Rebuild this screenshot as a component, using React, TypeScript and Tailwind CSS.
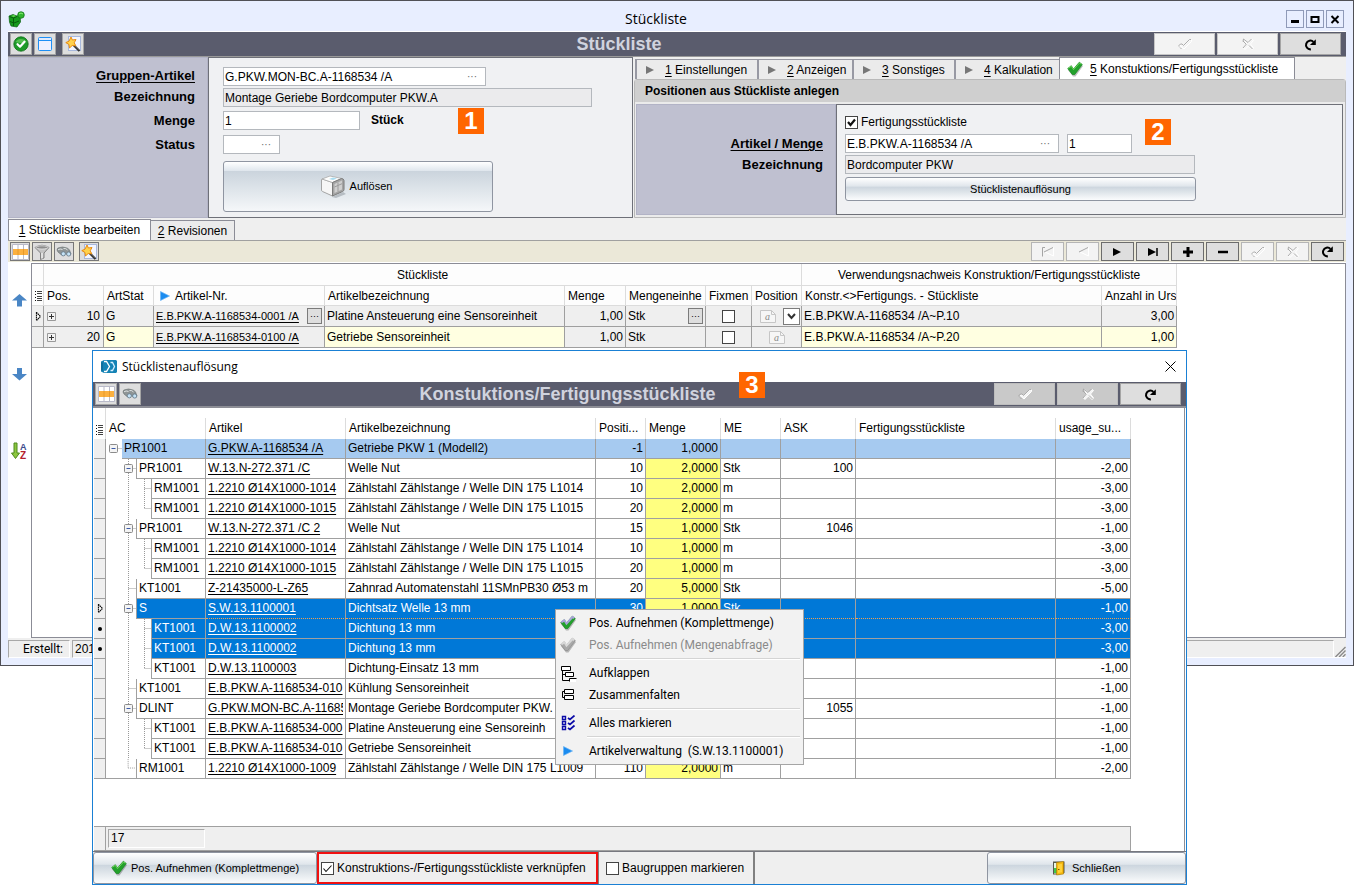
import { useState, type ReactNode } from "react";
import clsx from "clsx";

type TreeRow = {
  level: number;
  ac: string;
  artikel: string;
  text: string;
  pos?: string;
  menge?: string;
  me?: string;
  ask?: string;
  usage?: string;
  open?: boolean;
  last?: boolean;
  mark?: "cursor" | "dot";
};

const rows: TreeRow[] = [
  { level: 0, ac: "PR1001", artikel: "G.PKW.A-1168534 /A", text: "Getriebe PKW 1 (Modell2)", pos: "-1", menge: "1,0000", open: true },
  { level: 1, ac: "PR1001", artikel: "W.13.N-272.371 /C", text: "Welle Nut", pos: "10", menge: "2,0000", me: "Stk", ask: "100", usage: "-2,00", open: true },
  { level: 2, ac: "RM1001", artikel: "1.2210 Ø14X1000-1014", text: "Zählstahl Zählstange / Welle DIN 175 L1014", pos: "10", menge: "2,0000", me: "m", usage: "-3,00" },
  { level: 2, ac: "RM1001", artikel: "1.2210 Ø14X1000-1015", text: "Zählstahl Zählstange / Welle DIN 175 L1015", pos: "20", menge: "2,0000", me: "m", usage: "-3,00", last: true },
  { level: 1, ac: "PR1001", artikel: "W.13.N-272.371 /C 2", text: "Welle Nut", pos: "15", menge: "1,0000", me: "Stk", ask: "1046", usage: "-1,00", open: true },
  { level: 2, ac: "RM1001", artikel: "1.2210 Ø14X1000-1014", text: "Zählstahl Zählstange / Welle DIN 175 L1014", pos: "10", menge: "1,0000", me: "m", usage: "-3,00" },
  { level: 2, ac: "RM1001", artikel: "1.2210 Ø14X1000-1015", text: "Zählstahl Zählstange / Welle DIN 175 L1015", pos: "20", menge: "1,0000", me: "m", usage: "-3,00", last: true },
  { level: 1, ac: "KT1001", artikel: "Z-21435000-L-Z65", text: "Zahnrad Automatenstahl 11SMnPB30 Ø53 m", pos: "20", menge: "5,0000", me: "Stk", usage: "-5,00" },
  { level: 1, ac: "S", artikel: "S.W.13.1100001", text: "Dichtsatz Welle 13 mm", pos: "30", menge: "1,0000", me: "Stk", usage: "-1,00", open: true, mark: "cursor" },
  { level: 2, ac: "KT1001", artikel: "D.W.13.1100002", text: "Dichtung 13 mm", usage: "-3,00", mark: "dot" },
  { level: 2, ac: "KT1001", artikel: "D.W.13.1100002", text: "Dichtung 13 mm", usage: "-3,00", mark: "dot" },
  { level: 2, ac: "KT1001", artikel: "D.W.13.1100003", text: "Dichtung-Einsatz 13 mm", usage: "-1,00", last: true },
  { level: 1, ac: "KT1001", artikel: "E.B.PKW.A-1168534-010", text: "Kühlung Sensoreinheit", usage: "-1,00" },
  { level: 1, ac: "DLINT", artikel: "G.PKW.MON-BC.A-11685", text: "Montage Geriebe Bordcomputer PKW.", ask: "1055", usage: "-1,00", open: true },
  { level: 2, ac: "KT1001", artikel: "E.B.PKW.A-1168534-000", text: "Platine Ansteuerung eine Sensoreinh", usage: "-1,00" },
  { level: 2, ac: "KT1001", artikel: "E.B.PKW.A-1168534-010", text: "Getriebe Sensoreinheit", usage: "-1,00", last: true },
  { level: 1, ac: "RM1001", artikel: "1.2210 Ø14X1000-1009", text: "Zählstahl Zählstange / Welle DIN 175 L1009", pos: "110", menge: "2,0000", me: "m", usage: "-2,00", last: true },
];

/* ---------- icons ---------- */

const GreenCheck = ({ gray, lilac }: { gray?: boolean; lilac?: boolean }) => (
  <svg width="16" height="16" viewBox="0 0 16 16">
    <path d="M1 8.500 4.500 6 7 9 13 2l3 2.500L8.500 15H6z" fill="#000" opacity=".25" transform="translate(0 .5)" />
    <path d="M.7 7.500 4.300 4.700 6.500 8 12.300 1.200 15.300 3.500 7.800 13.500H5.300z" fill={gray ? "#a9a9a9" : "#23a12c"} stroke={gray ? "#8d8d8d" : "#158a20"} strokeWidth=".7" />
    <path d="M1.300 7.300 4.300 5.300 6.500 8.700 12.500 2 14.300 3.200" fill="none" stroke={gray ? "#d8d8d8" : lilac ? "#a9a3d8" : "#6fd45c"} strokeWidth={lilac || gray ? 2 : 1} />
  </svg>
);

const RoundCheckIcon = () => (
  <svg width="16" height="16" viewBox="0 0 16 16">
    <circle cx="8" cy="8" r="7.2" fill="#1d9a28" stroke="#0c6d15" strokeWidth=".8" />
    <path d="M2.500 6a6 5 0 0 1 11 0q-5.500 2-11 0z" fill="#6cd061" opacity=".7" />
    <path d="m4.500 8.200 2.500 2.500 4.500-5" fill="none" stroke="#fff" strokeWidth="2.200" strokeLinecap="round" strokeLinejoin="round" />
  </svg>
);

const WindowIcon = () => (
  <svg width="16" height="16" viewBox="0 0 16 16">
    <rect x="1.500" y="1.500" width="13" height="13" rx="1" fill="#eef0ff" stroke="#1e8ff5" />
    <path d="M2 4.500h12" stroke="#1e8ff5" />
    <path d="M2 3h12" stroke="#cfe6ff" />
  </svg>
);

const WandIcon = () => (
  <svg width="16" height="16" viewBox="0 0 16 16">
    <rect x="3.500" y=".5" width="12" height="14" fill="#f2f5ff" stroke="#a8b8dc" />
    <path d="m8.500 9 6 6" stroke="#333" strokeWidth="2.200" />
    <path d="m9.500 9 5 5" stroke="#999" strokeWidth=".7" />
    <path d="m6 1 1.400 3 3.600-.5L9.200 6.800l1.600 3-3.600-.3L4.500 12l-.6-3.600L.8 6.600 4 5.200z" fill="#ffd24d" stroke="#e88a10" strokeWidth="1" />
  </svg>
);

const GridIcon = () => (
  <svg width="17" height="16" viewBox="0 0 17 16">
    <path fill="#fff" stroke="#b9bac9" d="M.5.5h16v15H.5z" />
    <path stroke="#b9bac9" d="M6 1v14M11.500 1v14" />
    <path fill="#fbb040" d="M1 5h15v6H1z" />
    <path stroke="#e89a28" d="M6 5v6M11.500 5v6" />
  </svg>
);

const FilterIcon = () => (
  <svg width="16" height="16" viewBox="0 0 16 16">
    <path d="M1 3.500Q8-1 15 3.500L10 9v5l-3.500 1.500V9z" fill="#c4c4c4" stroke="#6d6d6d" strokeWidth=".8" />
    <ellipse cx="8" cy="3.400" rx="6" ry="1.600" fill="#8d8d8d" stroke="#eee" strokeWidth=".7" />
    <path d="M8 9v5.500" stroke="#fff" />
  </svg>
);

const BinocularsIcon = () => (
  <svg width="16" height="14" viewBox="0 0 16 14">
    <path d="M1 5q0-2.500 3-2.500L6.500 2l2.500.5q3 0 4.500 2.500l1.500 4-3 1-4-2-3 1.500L2 7z" fill="#8f9596" stroke="#62696a" strokeWidth=".6" />
    <path d="M2 4.800q2-1.500 4.500-.3M7.500 3.500q2.500-.5 4 1.500" stroke="#dfe3e3" fill="none" />
    <circle cx="7.300" cy="8.800" r="2.100" fill="#c4e3f7" stroke="#6b7f8d" strokeWidth=".9" />
    <circle cx="12.700" cy="9" r="2.100" fill="#c4e3f7" stroke="#6b7f8d" strokeWidth=".9" />
  </svg>
);

const AppLogo = () => (
  <svg width="17" height="17" viewBox="0 0 17 17">
    <path d="M1 5 5 3.500 9 5l3-1 .5 7L9 16l-6-1-1.500-4z" fill="#169a1c" stroke="#0a5f10" strokeWidth=".7" />
    <path d="m1.500 5.500 4 1.500L9 5.500M2 10.500l4 1.500 5-2M5.500 7v8" stroke="#075c0c" fill="none" />
    <path d="m3 5 3-1 2 1-2.500 1z" fill="#62d84f" />
    <circle cx="13" cy="4" r="3.300" fill="#2fb52c" stroke="#0b6d12" strokeWidth=".7" />
    <path d="M11 3q2-2 4 0" stroke="#8bec77" fill="none" />
  </svg>
);

const DialogLogo = () => (
  <svg width="16" height="13" viewBox="0 0 16 13">
    <path d="M0 1.500 3 0v13l-3-1.500zM3 0h12l1 1v11l-1 1H3z" fill="#1583b5" />
    <path d="M3 1.500h2.500L8.500 6.500l-3 5H3" fill="none" stroke="#fff" strokeWidth="1.300" />
    <path d="M9.500 2.500h2l2 4-2 4h-2" fill="none" stroke="#d5efff" strokeWidth="1.300" />
    <path d="M1 2.500v8" stroke="#0a5a86" />
  </svg>
);

const BoxIcon = () => (
  <svg width="27" height="24" viewBox="0 0 27 24">
    <path d="m12 22 11-5 3 2-10 4z" fill="#8a929a" opacity=".5" />
    <path d="M1.500 5q0-1 1-1l10 3.500V21l-10-4.500q-1-.5-1-1.500z" fill="#f6f6f6" stroke="#a4a4a4" />
    <path d="m2 4 8-3 12 2.500-9.500 4z" fill="#fdfdfd" stroke="#aaa" strokeWidth=".8" />
    <path d="m9 4 4-1.500 4 1-4 1.500z" fill="#a9dcf0" />
    <path d="m12.500 7.500 9-4q2 0 2.500 2v9q0 1.500-1.500 2L12.500 21z" fill="#a5a5a5" stroke="#7b7b7b" />
    <path d="m14.500 9 7.500-3.500v9L14.500 18z" fill="#cfcfcf" />
    <path d="m14.500 12 7.500-3.300M18 7.500v9" stroke="#9b9b9b" />
  </svg>
);

const DoorIcon = () => (
  <svg width="14" height="16" viewBox="0 0 14 16">
    <path d="M1 1.500h11.500V13L7 14.500H1z" fill="#56594f" />
    <path d="M2 3h3v10.500H2z" fill="#e9f5e4" />
    <path d="M2 8h3v5H2z" fill="#3fc64b" />
    <path d="m4.500 2.500 7-1v12.500l-7 1z" fill="#f6b90f" stroke="#a67700" strokeWidth=".6" />
    <path d="m6 4.500 4-.7v8.500l-4 .7z" fill="#ffd23c" />
    <path d="M6 9.500h1.500" stroke="#7a5600" />
  </svg>
);

const ReloadIcon = () => (
  <svg width="13" height="13" viewBox="1 1 11 11">
    <path d="M6.800 10.600A3.700 3.700 0 1 1 9 4.300" fill="none" stroke="#000" strokeWidth="1.700" />
    <path d="M11 2v5H6z" fill="#000" />
  </svg>
);

const OutlineCheck = () => (
  <svg width="14" height="12" viewBox="0 0 14 12">
    <path d="m2 7.500 2-1 1.500 1.500L12 1.500l1.500.5v1.500L6 11z" fill="#f3f3f3" stroke="#fff" />
    <path d="M1 8.500v-1L2.500 6H4l1.500 1.500 6-6H13M2 9.500l1.500 1.500" fill="none" stroke="#a3a3a3" strokeWidth=".9" />
  </svg>
);

const OutlineCross = () => (
  <svg width="12" height="12" viewBox="0 0 12 12">
    <path d="m2.500 1.500 4 3.500L10 1.500l1.500 1L8.500 6l3 4-1.500 1.500L6.500 8 3 11.500 1.500 10 4.500 6z" fill="#f3f3f3" stroke="#fff" />
    <path d="m1 3.500.5-2.500L6 4.500 9.500 1M4.500 6 1 10M1 3l3 3M7 7.500l3.500 3.500" fill="none" stroke="#a3a3a3" strokeWidth=".9" />
  </svg>
);

const PrevIcon = ({ first }: { first?: boolean }) => (
  <svg width="14" height="10" viewBox="0 0 14 10">
    <path d="M12.500.5v8.500L4 5" fill="none" stroke="#fff" />
    <path d="M12 .5 3 5" fill="none" stroke="#a5a5a5" />
    {first && <path d="M4 .5H1.500v9" fill="none" stroke="#a5a5a5" />}
  </svg>
);

const NextIcon = ({ last }: { last?: boolean }) => (
  <svg width="12" height="8" viewBox="0 0 12 8">
    <path d="M1 0v8l8-4z" fill="#000" />
    {last && <path d="M10 0v8" stroke="#000" strokeWidth="1.500" />}
  </svg>
);

const SignIcon = ({ plus }: { plus?: boolean }) => (
  <svg width="10" height="10" viewBox="0 0 10 10">
    <path d={plus ? "M0 5h10M5 0v10" : "M0 5h10"} stroke="#000" strokeWidth={plus ? 3 : 2.500} />
  </svg>
);

const BlueTriangle = () => (
  <svg width="10" height="10" viewBox="0 0 10 10">
    <path d="M.5.5v9L9.500 5z" fill="#1b8cf0" stroke="#6bb5f5" strokeWidth=".7" />
  </svg>
);

const ListIcon = () => (
  <svg width="7" height="10" viewBox="0 0 7 10" className="inline-block align-middle">
    <path d="M2 .5h5M2 2.500h5M2 5.500h5M2 7.500h5M2 9.500h5" stroke="#111" strokeWidth=".8" />
    <path d="M0 .5h1M0 3.500h1M0 6.500h1M0 9.500h1" stroke="#111" />
  </svg>
);

const CursorIcon = () => (
  <svg width="6" height="9" viewBox="0 0 6 9" className="mx-auto">
    <path d="M1.500 .5v8l4-4z" fill="#fff" stroke="#111" strokeWidth="1.200" strokeDasharray="1.500 .5" />
  </svg>
);

const ArrowIcon = ({ down }: { down?: boolean }) => (
  <svg width="15" height="13" viewBox="0 0 15 13">
    <path d={down ? "M5 0h5v6h5l-7.500 6.500L0 6h5z" : "M5 12.500h5v-6h5L7.500 0 0 6.500h5z"} fill="#4a86c5" />
  </svg>
);

const NoteIcon = () => (
  <svg width="16" height="13" viewBox="0 0 16 13">
    <path d="M.5.5h11l4 4v8H.5z" fill="#f6f6f6" stroke="#c6c6c6" />
    <path d="M11.500.5v4h4" fill="none" stroke="#c6c6c6" />
    <text x="5" y="10" fontSize="10" fontStyle="italic" fill="#8a8a8a" className="font-['Liberation_Serif',serif]">a</text>
  </svg>
);

const ExpandIcon = () => (
  <svg width="17" height="17" viewBox="0 0 17 17">
    <path d="M2 2h8v3H2zM6 8h7v3H6zM10 14h6v3h-6z" fill="#fff" />
    <path d="M1.500 1.500h9v4h-9zM5.500 7.500h8v4h-8zM9.500 16.500v-3h7M2.500 5.500v10h7M2.500 9.500h3" fill="none" stroke="#000" />
  </svg>
);

const CollapseIcon = () => (
  <svg width="14" height="14" viewBox="0 0 14 14">
    <path d="M3.500 1.500h9v4h-9zM3.500 7.500h9v4h-9z" fill="#fff" stroke="#000" />
    <path d="M3 3.500H1.500v6H3" fill="none" stroke="#000" />
  </svg>
);

const MarkAllIcon = () => (
  <svg width="15" height="16" viewBox="0 0 15 16">
    <path d="M1.500 1.500h3v3h-3zM1.500 6.500h3v3h-3zM1.500 11.500h3v3h-3z" fill="none" stroke="#0c0ca8" strokeWidth="1.400" />
    <path d="m7 3 2 1.500L13.500.5M7 8l2 1.500 4.500-4M7 13l2 1.500 4.500-4" fill="none" stroke="#0c0ca8" strokeWidth="1.700" />
  </svg>
);

const ExpandBox = () => (
  <svg width="9" height="9" viewBox="0 0 9 9">
    <path d="M.5.5h8v8h-8z" fill="#f3f3f3" stroke="#999" />
    <path d="M2 4.500h5M4.500 2v5" stroke="#333" />
  </svg>
);

/* ---------- small building blocks ---------- */

const field = "h-[19px] border border-[#b4b8bd] bg-white px-px text-[12px] outline-none";
const fieldReadonly = "h-[19px] border border-[#b4b8bd] bg-[#ebebed] px-px text-[12px] outline-none";
const glossy = "rounded-[3px] border border-[#8f95a1] text-[11px] flex items-center justify-center";
const glossyBg = "bg-[linear-gradient(#ffffff_0%,#dfe5eb_38%,#ccd5de_40%,#dfe5ea_65%,#fbfcfd_100%)]";
const dots = "h-4 w-[15px] border border-[#7b7b7b] bg-[#dedede] text-[9px] leading-none";

function IconButton({ label, children, className }: { label: string; children: ReactNode; className?: string }) {
  return (
    <button aria-label={label} className={clsx("flex items-center justify-center border bg-[#dedede]", className)}>
      {children}
    </button>
  );
}

function NavButton({ label, disabled, children }: { label: string; disabled?: boolean; children: ReactNode }) {
  return (
    <button
      aria-label={label}
      disabled={disabled}
      className={clsx("flex h-[19px] w-[33px] items-center justify-center border", disabled ? "border-[#b5b5b5] bg-[#f3f3f3]" : "border-[#6c6c6c] bg-[#dedede]")}
    >
      {children}
    </button>
  );
}

function Lookup({ id, value, className }: { id: string; value: string; className: string }) {
  return (
    <div className={clsx("flex h-[19px] items-center border border-[#b4b8bd] bg-white", className)}>
      <input id={id} defaultValue={value} className="min-w-0 flex-1 bg-transparent px-px text-[12px] outline-none" />
      <button aria-label="Auswahl" className="w-[18px] text-left text-[10px] leading-none text-[#666]">···</button>
    </div>
  );
}

function Checkbox({ label, checked, bold }: { label?: string; checked?: boolean; bold?: boolean }) {
  return (
    <label className="relative flex items-center gap-[3px] text-[12px] whitespace-nowrap">
      <input type="checkbox" defaultChecked={checked} aria-label={label ?? "Fixmenge"} className="peer size-[13px] appearance-none border border-[#444] bg-white" />
      <svg width="13" height="13" viewBox="0 0 13 13" className="pointer-events-none absolute left-0 hidden peer-checked:block">
        <path d={bold ? "m3 6 2.500 3L10 3.500" : "m2.500 6.500 2.500 3 5.500-6"} fill="none" stroke="#111" strokeWidth={bold ? 2.200 : 1.100} />
      </svg>
      {label}
    </label>
  );
}

function Badge({ n, className }: { n: number; className: string }) {
  return <div className={clsx("absolute flex size-[26px] items-center justify-center bg-[#ff6600] text-[24px] leading-none font-bold text-white", className)}>{n}</div>;
}

// Tab caption with its underlined accelerator digit
const TabText = ({ n, children }: { n: number; children: ReactNode }) => (
  <span className="whitespace-nowrap">
    <span className="underline underline-offset-2">{n}</span> {children}
  </span>
);

function TreeGutter({ row, isLastRow }: { row: TreeRow; isLastRow: boolean }) {
  const width = [16, 30, 45][row.level];
  const x = [7.5, 22.5, 38.5][row.level];
  return (
    <svg width={width} height="20" viewBox={`0 0 ${width} 20`} className={clsx("shrink-0", isLastRow && "border-b border-[#a0a0a0]")}>
      <g stroke="#999" strokeDasharray="1 1" fill="none">
        {row.level > 0 && <path d={isLastRow ? "M22.500 0V10" : "M22.500 0V20"} />}
        {row.level === 2 && <path d={row.last ? "M38.500 0V10" : "M38.500 0V20"} />}
        <path d={`M${x} 9.500H${width}`} />
      </g>
      {row.open && (
        <g>
          <rect x={x - 4} y="5.500" width="8" height="8" rx="1" fill="#f4f4f4" stroke="#8b8b8b" />
          <path d={`M${x - 2} 9.500h4`} stroke="#3b5ba8" />
        </g>
      )}
    </svg>
  );
}

/* ---------- upper form ---------- */

const tabs = ["Einstellungen", "Anzeigen", "Sonstiges", "Kalkulation"];
const tabWidths = ["w-[122px]", "w-[95px]", "w-[102px]", "w-[105px]"];

function HeadForm() {
  return (
    <div className="flex h-[161px] flex-1 shrink-0 basis-[625px]">
      <div className="flex w-[200px] shrink-0 flex-col items-end border border-[#b2b3c6] bg-[#bfc0d0] pt-[8px] pr-3 text-[13px] leading-[19px] font-bold">
        <label htmlFor="gruppe" className="underline underline-offset-2">Gruppen-Artikel</label>
        <label htmlFor="bez" className="mt-[2px]">Bezeichnung</label>
        <label htmlFor="menge" className="mt-[5px]">Menge</label>
        <label htmlFor="status" className="mt-[5px]">Status</label>
      </div>
      <div className="relative flex flex-1 flex-col items-start border border-[#6e7078] bg-[#f0f1f3] pt-[9px] pl-[14px]">
        <Lookup id="gruppe" value="G.PKW.MON-BC.A-1168534 /A" className="w-[263px]" />
        <input id="bez" readOnly value="Montage Geriebe Bordcomputer PKW.A" className={clsx(fieldReadonly, "mt-[2px] w-[369px]")} />
        <div className="mt-[4px] flex items-center gap-[11px]">
          <input id="menge" defaultValue="1" className={clsx(field, "w-[137px]")} />
          <span className="text-[12px] leading-[19px] font-bold">Stück</span>
        </div>
        <Lookup id="status" value="" className="mt-[5px] w-[57px]" />
        <button className={clsx(glossy, "mt-[7px] h-[51px] w-[270px] gap-[3px] bg-[linear-gradient(#ffffff_0%,#dfe6ed_18%,#cbd4dd_19%,#dbe2e8_50%,#f5f7f9_100%)] pr-1")}>
          <BoxIcon />
          Auflösen
        </button>
        <Badge n={1} className="top-[50px] left-[249px]" />
      </div>
    </div>
  );
}

function CreatePanel() {
  return (
    <div className="flex h-[161px] shrink-0 grow-0 basis-[713px] flex-col pl-px">
      <div className="flex h-[22px] items-end pl-px text-[12px]">
        {tabs.map((t, i) => (
          <button key={t} className={clsx("flex h-[20px] items-center gap-[11px] border-t border-l-2 border-[#9899a3] bg-[#ebebeb] pl-[9px]", tabWidths[i])}>
            <svg width="8" height="8" viewBox="0 0 8 8"><path d="M0 0v8l8-4z" fill="#777" /></svg>
            <TabText n={i + 1}>{t}</TabText>
          </button>
        ))}
        <button className="flex h-[22px] w-[236px] items-center gap-[7px] border border-b-0 border-[#8b8c96] bg-white pl-[7px]">
          <GreenCheck />
          <TabText n={5}>Konstuktions/Fertigungsstückliste</TabText>
        </button>
      </div>
      <div className="flex flex-1 flex-col rounded-t-[3px] border border-[#b9b9b9] bg-[#ebebeb]">
        <h2 className="h-[22px] bg-[#cfcfcf] pl-[10px] text-[12px] leading-[22px] font-bold">Positionen aus Stückliste anlegen</h2>
        <div className="flex flex-1 px-[2px] py-[2px] pl-px">
          <div className="flex w-[200px] shrink-0 flex-col items-end border border-[#b2b3c6] bg-[#bfc0d0] pt-[29px] pr-3 text-[13px] leading-[19px] font-bold">
            <label htmlFor="artikel" className="underline underline-offset-2">Artikel / Menge</label>
            <label htmlFor="bez2" className="mt-[2px]">Bezeichnung</label>
          </div>
          <div className="relative flex flex-1 flex-col items-start border border-[#6e7078] bg-[#f0f1f3] pt-2 pl-[8px]">
            <Checkbox label="Fertigungsstückliste" checked bold />
            <div className="mt-[3px] flex gap-2">
              <Lookup id="artikel" value="E.B.PKW.A-1168534 /A" className="w-[214px]" />
              <input aria-label="Menge" defaultValue="1" className={clsx(field, "w-[65px]")} />
            </div>
            <input id="bez2" readOnly value="Bordcomputer PKW" className={clsx(fieldReadonly, "mt-[2px] w-[350px]")} />
            <button className={clsx(glossy, glossyBg, "mt-[3px] h-[24px] w-[351px]")}>Stücklistenauflösung</button>
            <Badge n={2} className="top-[14px] left-[308px]" />
          </div>
        </div>
      </div>
    </div>
  );
}

/* ---------- grid of the main window ---------- */

function MainGrid() {
  const head = "overflow-hidden border-r border-b border-[#dcdcdc] bg-[#fdfdfd] px-[3px] font-normal whitespace-nowrap";
  const cell = "overflow-hidden border-r border-b border-[#9f9f9f] px-[2px] whitespace-nowrap";
  const data = [
    { pos: "10", nr: "E.B.PKW.A-1168534-0001 /A", text: "Platine Ansteuerung eine Sensoreinheit", use: "E.B.PKW.A-1168534 /A~P.10", count: "3,00" },
    { pos: "20", nr: "E.B.PKW.A-1168534-0100 /A", text: "Getriebe Sensoreinheit", use: "E.B.PKW.A-1168534 /A~P.20", count: "1,00" },
  ];
  return (
    <table className="w-[1145px] table-fixed border-separate border-spacing-0 text-[12px] leading-[18px]">
      <colgroup>
        <col className="w-[12px]" />
        <col className="w-[60px]" />
        <col className="w-[50px]" />
        <col className="w-[171px]" />
        <col className="w-[240px]" />
        <col className="w-[61px]" />
        <col className="w-[80px]" />
        <col className="w-[46px]" />
        <col className="w-[50px]" />
        <col className="w-[300px]" />
        <col className="w-[75px]" />
      </colgroup>
      <thead>
        <tr className="h-[22px] text-center">
          <th className={head} />
          <th colSpan={8} className={head}>Stückliste</th>
          <th colSpan={2} className={head}>Verwendungsnachweis Konstruktion/Fertigungsstückliste</th>
        </tr>
        <tr className="h-[20px] text-left">
          <th className={clsx(head, "px-[2px]")}><ListIcon /></th>
          <th className={head}>Pos.</th>
          <th className={head}>ArtStat</th>
          <th className={head}>
            <span className="flex items-center gap-[5px] pl-[3px]"><BlueTriangle /> Artikel-Nr.</span>
          </th>
          <th className={head}>Artikelbezeichnung</th>
          <th className={head}>Menge</th>
          <th className={head}>Mengeneinhe</th>
          <th className={head}>Fixmen</th>
          <th className={head}>Position</th>
          <th className={head}>Konstr.&lt;&gt;Fertigungs. - Stückliste</th>
          <th className={head}>Anzahl in Urs</th>
        </tr>
      </thead>
      <tbody>
        {data.map((d, i) => {
          const first = i === 0;
          const edit = first ? "bg-[#efefef]" : "bg-[#ffffe1]";
          return (
            <tr key={d.pos} className="h-[21px] bg-[#efefef]">
              <td className={cell}>{first && <CursorIcon />}</td>
              <td className={cell}>
                <span className="flex items-center justify-between px-px"><ExpandBox />{d.pos}</span>
              </td>
              <td className={clsx(cell, edit)}>G</td>
              <td className={cell}>
                <span className="flex items-center justify-between">
                  <a href="#artikel" className="text-[11px] underline underline-offset-2">{d.nr}</a>
                  {first && <button aria-label="Artikel wählen" className={dots}>···</button>}
                </span>
              </td>
              <td className={clsx(cell, edit)}>{d.text}</td>
              <td className={clsx(cell, "text-right")}>1,00</td>
              <td className={cell}>
                <span className="flex items-center justify-between">
                  Stk
                  {first && <button aria-label="Einheit wählen" className={dots}>···</button>}
                </span>
              </td>
              <td className={cell}><span className="flex justify-center"><Checkbox /></span></td>
              <td className={clsx(cell, "pr-px")}>
                <span className={clsx("flex items-center", first ? "justify-end gap-[7px]" : "justify-center")}>
                  <NoteIcon />
                  {first && (
                    <button aria-label="Öffnen" className="flex h-[17px] w-[17px] items-center justify-center border border-[#7b7b7b] bg-white">
                      <svg width="9" height="7" viewBox="0 0 9 7"><path d="m1 1 3.500 4L8 1" fill="none" stroke="#333" strokeWidth="2" /></svg>
                    </button>
                  )}
                </span>
              </td>
              <td className={clsx(cell, edit)}>{d.use}</td>
              <td className={clsx(cell, edit, "text-right")}>{d.count}</td>
            </tr>
          );
        })}
      </tbody>
    </table>
  );
}

/* ---------- dialog ---------- */

function TreeTable() {
  return (
    <table className="w-[1037px] table-fixed border-separate border-spacing-0 text-[12px] leading-[19px]">
      <colgroup>
        <col className="w-[12px]" />
        <col className="w-[100px]" />
        <col className="w-[140px]" />
        <col className="w-[250px]" />
        <col className="w-[50px]" />
        <col className="w-[75px]" />
        <col className="w-[60px]" />
        <col className="w-[75px]" />
        <col className="w-[200px]" />
        <col className="w-[75px]" />
      </colgroup>
      <thead>
        <tr className="h-[31px] text-left align-bottom">
          <th className="border-r border-[#dcdcdc] px-[2px] font-normal"><ListIcon /></th>
          {["AC", "Artikel", "Artikelbezeichnung", "Positi...", "Menge", "ME", "ASK", "Fertigungsstückliste", "usage_su..."].map((h) => (
            <th key={h} className="p-0 font-normal">
              <div className="h-[21px] overflow-hidden border-r border-[#dcdcdc] px-[3px] leading-[21px] whitespace-nowrap">{h}</div>
            </th>
          ))}
        </tr>
      </thead>
      <tbody>
        {rows.map((r, i) => {
          const cell = clsx(
            "overflow-hidden border-r border-b px-[2px] py-0 whitespace-nowrap",
            r.mark === "cursor" ? "border-[#a0a0a0] border-b-[#f0a050] [border-bottom-style:dotted]" : "border-[#a0a0a0]",
            r.level === 0 && "bg-[#a6caf0]",
            r.mark && "bg-[#0078d7] text-white"
          );
          return (
            <tr key={i} className="h-[20px]">
              <td className="border-r border-b border-[#a0a0a0] bg-[#efefef] p-0 text-center">
                {r.mark === "cursor" && <CursorIcon />}
                {r.mark === "dot" && <span className="mx-auto block size-1 rounded-full bg-black" />}
              </td>
              <td className="border-r border-[#a0a0a0] p-0">
                <div className="flex h-[20px]">
                  <TreeGutter row={r} isLastRow={i === rows.length - 1} />
                  <span
                    className={clsx(
                      "flex-1 border-b border-[#a0a0a0] pl-[2px]",
                      r.level > 0 && "border-l",
                      r.level === 0 && "bg-[#a6caf0]",
                      r.mark && "bg-[#0078d7] text-white"
                    )}
                  >
                    {r.ac}
                  </span>
                </div>
              </td>
              <td className={cell}>
                <a href="#artikel" className="block overflow-hidden underline underline-offset-2">{r.artikel}</a>
              </td>
              <td className={cell}>{r.text}</td>
              <td className={clsx(cell, "text-right")}>{r.pos}</td>
              <td className={clsx("border-r border-b border-[#a0a0a0] px-[2px] py-0 text-right", r.level === 0 ? "bg-[#a6caf0]" : "bg-[#ffff80]")}>{r.menge}</td>
              <td className={cell}>{r.me}</td>
              <td className={clsx(cell, "text-right")}>{r.ask}</td>
              <td className={cell} />
              <td className={clsx(cell, "text-right")}>{r.usage}</td>
            </tr>
          );
        })}
      </tbody>
    </table>
  );
}

function MenuItem({ icon, children, disabled }: { icon: ReactNode; children: ReactNode; disabled?: boolean }) {
  return (
    <button role="menuitem" disabled={disabled} className={clsx("flex h-[22px] w-full items-center whitespace-pre", disabled ? "text-[#8a8a8a]" : "text-black")}>
      <span className="flex w-[31px] shrink-0 justify-center pr-[11px]">{icon}</span>
      {children}
    </button>
  );
}

const MenuLine = () => <div className="my-[2px] mr-px ml-[29px] h-[2px] border-t border-[#d4d4d4] bg-white" />;

function ContextMenu() {
  return (
    <div role="menu" className="absolute top-[258px] left-[462px] w-[249px] border border-[#a5a5a5] bg-[#f2f2f2] p-[2px] font-['Roboto',sans-serif] text-[12px]">
      <MenuItem icon={<GreenCheck lilac />}>Pos. Aufnehmen (Komplettmenge)</MenuItem>
      <MenuItem icon={<GreenCheck gray />} disabled>Pos. Aufnehmen (Mengenabfrage)</MenuItem>
      <MenuLine />
      <MenuItem icon={<ExpandIcon />}>Aufklappen</MenuItem>
      <MenuItem icon={<CollapseIcon />}>Zusammenfalten</MenuItem>
      <MenuLine />
      <MenuItem icon={<MarkAllIcon />}>Alles markieren</MenuItem>
      <MenuLine />
      <MenuItem icon={<BlueTriangle />}>{"Artikelverwaltung  (S.W.13.1100001)"}</MenuItem>
    </div>
  );
}

function Dialog({ onClose }: { onClose: () => void }) {
  return (
    <div role="dialog" aria-label="Stücklistenauflösung" className="absolute top-[350px] left-[92px] w-[1095px] border border-[#1a80d4] bg-white">
      <div className="flex h-[31px] items-center justify-between pr-[10px] pl-2">
        <div className="flex items-center gap-[5px] font-['Open_Sans','Noto_Sans',sans-serif] text-[12px]">
          <DialogLogo />
          Stücklistenauflösung
        </div>
        <button aria-label="Fenster schließen" onClick={onClose}>
          <svg width="11" height="11" viewBox="0 0 11 11"><path d="m.5.5 10 10m0-10-10 10" stroke="#000" /></svg>
        </button>
      </div>
      <div className="flex h-[26px] items-center gap-[2px] border-b-2 border-[#8d8e96] bg-[#5a5c6d] pr-[5px] pl-[2px]">
        <IconButton label="Tabelle" className="size-[22px] border-[#a5a5a5]"><GridIcon /></IconButton>
        <IconButton label="Suchen" className="size-[22px] border-[#a5a5a5]"><BinocularsIcon /></IconButton>
        <h2 className="flex-1 text-center text-[18px] leading-none font-bold text-[#d0d3de]">Konstuktions/Fertigungsstückliste</h2>
        <button aria-label="Speichern" disabled className="flex h-[22px] w-[61px] items-center justify-center border border-[#bdbdbd] bg-[#c9c9c9]"><OutlineCheck /></button>
        <button aria-label="Abbrechen" disabled className="flex h-[22px] w-[61px] items-center justify-center border border-[#bdbdbd] bg-[#c9c9c9]"><OutlineCross /></button>
        <IconButton label="Aktualisieren" className="h-[22px] w-[61px] border-[#a5a5a5]"><ReloadIcon /></IconButton>
      </div>
      <div className="mr-px border-r border-[#8d8e96] pl-px">
        <TreeTable />
        <div className="mt-[47px] flex h-[25px] w-[1037px] border-y border-r border-[#a0a0a0] bg-[#efefef]">
          <div className="w-[12px] border-r border-[#a0a0a0]" />
          <div className="m-[2px] w-[97px] border border-[#a8a8a8] border-r-white border-b-white pl-[2px] text-[12px] leading-[17px]">17</div>
        </div>
      </div>
      <div className="flex h-[33px] items-stretch border-t border-[#77787f] bg-[#efefef]">
        <button className={clsx(glossy, glossyBg, "w-[224px] gap-1")}>
          <GreenCheck />
          Pos. Aufnehmen (Komplettmenge)
        </button>
        <div className="flex w-[281px] items-center border-2 border-[#f01010] pl-[2px]">
          <Checkbox label="Konstruktions-/Fertigungsstückliste verknüpfen" checked />
        </div>
        <div className="flex w-[157px] items-center border-r-2 border-l border-[#808080] pl-[7px]">
          <Checkbox label="Baugruppen markieren" />
        </div>
        <button onClick={onClose} className={clsx(glossy, glossyBg, "ml-auto w-[199px] gap-[6px]")}>
          <DoorIcon />
          Schließen
        </button>
      </div>
      <Badge n={3} className="top-[21px] left-[646px]" />
      <ContextMenu />
    </div>
  );
}

export default function App() {
  const [open, setOpen] = useState(true);

  return (
    <div className="relative min-h-screen bg-white font-['Liberation_Sans',Arial,sans-serif] text-black">
      <div className="border border-[#505056] bg-[#e8eeff] px-[7px] pb-[7px]">
        {/* title bar */}
        <div className="flex h-[30px] items-center pt-[6px] pr-[2px]">
          <div className="w-[18px] shrink-0"><AppLogo /></div>
          <h1 className="flex-1 text-center font-['Open_Sans','Noto_Sans',sans-serif] text-[14px] leading-none">Stückliste</h1>
          <div className="flex gap-[2px]">
            {["M2 7.500h8", "M2.500 3h7v5h-7z", "m2.500 2 7 7m0-7-7 7"].map((d, i) => (
              <button key={d} aria-label={["Minimieren", "Maximieren", "Schließen"][i]} className="flex size-[18px] items-center justify-center border border-[#8f9ab8]">
                <svg width="12" height="11" viewBox="0 0 12 11"><path d={d} fill="none" stroke="#000" strokeWidth={i === 0 ? 3 : 2} /></svg>
              </button>
            ))}
          </div>
        </div>

        <div className="flex h-[26px] items-center gap-[2px] border-t border-b border-t-white border-b-[#999] bg-[#5a5c6d] pr-[5px] pl-[2px]">
          <IconButton label="Übernehmen" className="size-[22px] border-[#a5a5a5]"><RoundCheckIcon /></IconButton>
          <IconButton label="Fenster" className="size-[22px] border-[#a5a5a5]"><WindowIcon /></IconButton>
          <IconButton label="Assistent" className="ml-1 size-[22px] border-[#a5a5a5]"><WandIcon /></IconButton>
          <span className="flex-1 text-center text-[18px] leading-none font-bold text-[#d0d3de]">Stückliste</span>
          <button aria-label="Speichern" disabled className="flex h-[22px] w-[61px] items-center justify-center border border-[#c5c5c5] bg-[#f3f3f3]"><OutlineCheck /></button>
          <button aria-label="Abbrechen" disabled className="flex h-[22px] w-[61px] items-center justify-center border border-[#c5c5c5] bg-[#f3f3f3]"><OutlineCross /></button>
          <IconButton label="Aktualisieren" className="h-[22px] w-[61px] border-[#a5a5a5]"><ReloadIcon /></IconButton>
        </div>

        <div className="flex bg-[#efefef]">
          <HeadForm />
          <CreatePanel />
        </div>

        {/* list tabs */}
        <div className="flex h-[22px] items-end bg-[#efefef] text-[12px]">
          <button className="h-[21px] w-[143px] border border-b-0 border-[#8b8c96] bg-white"><TabText n={1}>Stückliste bearbeiten</TabText></button>
          <button className="h-[20px] w-[84px] border border-b-0 border-l-0 border-[#8b8c96] bg-[#ebebeb]"><TabText n={2}>Revisionen</TabText></button>
        </div>
        <div className="flex h-[23px] items-center gap-[2px] border-t border-b border-t-[#a0a0a0] border-b-white bg-[#ebe8d8] pr-[2px] pl-[2px]">
          <IconButton label="Tabelle" className="h-[19px] w-[20px] border-[#777]"><GridIcon /></IconButton>
          <IconButton label="Filter" className="h-[19px] w-[20px] border-[#777]"><FilterIcon /></IconButton>
          <IconButton label="Suchen" className="h-[19px] w-[20px] border-[#777]"><BinocularsIcon /></IconButton>
          <IconButton label="Assistent" className="ml-[3px] h-[19px] w-[20px] border-[#777]"><WandIcon /></IconButton>
          <div className="ml-auto flex gap-[2px]">
            <NavButton label="Erster" disabled><PrevIcon first /></NavButton>
            <NavButton label="Zurück" disabled><PrevIcon /></NavButton>
            <NavButton label="Weiter"><NextIcon /></NavButton>
            <NavButton label="Letzter"><NextIcon last /></NavButton>
            <NavButton label="Einfügen"><SignIcon plus /></NavButton>
            <NavButton label="Löschen"><SignIcon /></NavButton>
            <NavButton label="Speichern" disabled><OutlineCheck /></NavButton>
            <NavButton label="Abbrechen" disabled><OutlineCross /></NavButton>
            <NavButton label="Aktualisieren"><ReloadIcon /></NavButton>
          </div>
        </div>

        <div className="flex h-[375px] bg-white">
          <div className="flex w-[23px] shrink-0 flex-col items-center gap-[61px] pt-[31px]">
            <button aria-label="Nach oben"><ArrowIcon /></button>
            <button aria-label="Nach unten"><ArrowIcon down /></button>
            <button aria-label="Sortieren">
              <svg width="17" height="18" viewBox="0 0 17 18">
                <path d="M3 1h3v10h2.500l-4 5.500L.5 11H3z" fill="#8cc63f" stroke="#4d8a1c" />
                <text x="9" y="8" fontSize="9" fontWeight="bold" fill="#3c4a8c">A</text>
                <text x="9" y="17" fontSize="10" fontWeight="bold" fill="#b5202c">Z</text>
              </svg>
            </button>
          </div>
          <div className="flex-1 border border-[#8b8c96]">
            <MainGrid />
          </div>
        </div>

        {/* status bar */}
        <div className="flex justify-between bg-[#efefef] pt-[2px] text-[12px] leading-[16px]">
          <div className="flex flex-1 gap-[2px]">
            <div className="w-[62px] border border-[#a8a8a8] border-r-white border-b-white pr-[6px] text-right font-['Roboto',sans-serif]">Erstellt:</div>
            <div className="flex-1 border border-[#a8a8a8] border-r-white border-b-white pl-[2px]">201</div>
          </div>
          <svg width="12" height="12" viewBox="0 0 12 12" className="self-end border-b border-white"><path d="M1 12 12 1M5 12l7-7M9 12l3-3" stroke="#888" strokeWidth="1.500" /></svg>
        </div>
      </div>

      {open && <Dialog onClose={() => setOpen(false)} />}
    </div>
  );
}
